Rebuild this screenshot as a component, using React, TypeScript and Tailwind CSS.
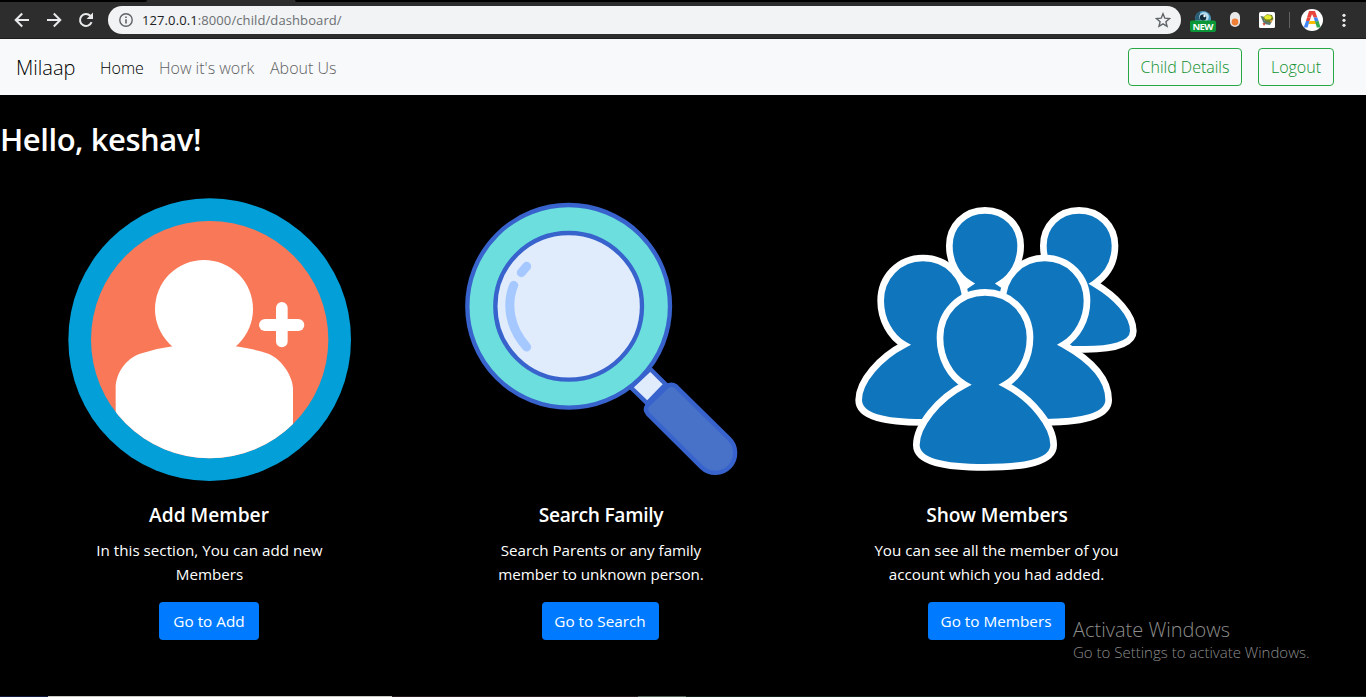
import React from "react";

const ui = "font-['Open_Sans','Noto_Sans',sans-serif]";

function BrowserBar() {
  return (
    <header className="flex h-[39px] flex-col bg-[#2d2d2d]">
      <div className="flex h-[2px] shrink-0 bg-[#2d2d2d]">
        <span className="w-[147px] shrink-0 rounded-br-sm bg-black" />
        <span className="w-[148px]" />
        <span className="flex-1 rounded-bl-sm bg-black" />
      </div>
      <div className="flex h-[36px] shrink-0 items-center">
        <svg className="ml-[14px] h-4 w-4 shrink-0" viewBox="0 0 16 16" fill="none" stroke="#e8eaec" strokeWidth="2">
          <path d="M15 8H2.5M8.2 1.5L1.7 8l6.5 6.5" />
        </svg>
        <svg className="ml-4 h-4 w-4 shrink-0" viewBox="0 0 16 16" fill="none" stroke="#e8eaec" strokeWidth="2">
          <path d="M1 8h12.5M7.8 1.5L14.3 8l-6.5 6.5" />
        </svg>
        <svg className="ml-4 h-4 w-4 shrink-0" viewBox="0 0 16 16" fill="none" stroke="#e8eaec" strokeWidth="2">
          <path d="M13.6 10.2A6 6 0 1 1 12.3 3.8L14 5.5" />
          <path d="M15 0.6V7H8.6z" fill="#e8eaec" stroke="none" />
        </svg>
        <div className="ml-[14px] flex h-7 w-[1073px] shrink-0 items-center rounded-full bg-[#f1f3f4] pl-[11px] pr-[10px]">
          <svg className="h-[14px] w-[14px]" viewBox="0 0 14 14" fill="none" stroke="#5f6368" strokeWidth="1.4">
            <circle cx="7" cy="7" r="6.2" />
            <path d="M7 6.2v4.3M7 3.4v1.5" strokeWidth="1.6" />
          </svg>
          <span className={`${ui} ml-[9px] whitespace-nowrap text-[13px] leading-5 tracking-[0.1px] text-[#202124]`}>
            127.0.0.1<span className="text-[#6b6f73]">:8000/child/dashboard/</span>
          </span>
          <svg className="ml-auto h-4 w-4" viewBox="0 0 16 16" fill="none" stroke="#5f6368" strokeWidth="1.4">
            <path d="M8 1.8l1.8 4.4 4.7.4-3.6 3.1 1.1 4.6L8 11.8l-4 2.5 1.1-4.6-3.6-3.1 4.7-.4z" />
          </svg>
        </div>
        <svg className="ml-[9px] h-6 w-[26px] shrink-0" viewBox="0 0 26 24">
          <circle cx="13" cy="11" r="8" fill="#4d9bc4" />
          <path d="M5 11a8 8 0 0 1 5-7.4l2 8.4H5z" fill="#2b5c75" />
          <circle cx="14" cy="9" r="4.8" fill="#b9def0" />
          <circle cx="13" cy="9.6" r="3.2" fill="#102d3d" />
          <circle cx="14.5" cy="8" r="1.2" fill="#fff" />
          <rect y="12.5" width="26" height="11.5" rx="2" fill="#0b9637" />
          <text x="13" y="22" textAnchor="middle" fill="white" fontFamily="Open Sans" fontWeight="700" fontSize="9.5" textLength="21">NEW</text>
        </svg>
        <svg className="ml-[14px] h-4 w-[10px] shrink-0" viewBox="0 0 10 16">
          <rect width="10" height="15" rx="5" fill="#e8e8e8" />
          <circle cx="5" cy="10" r="3.4" fill="#ef7e36" />
        </svg>
        <svg className="ml-[19px] h-4 w-4 shrink-0" viewBox="0 0 16 16">
          <rect width="16" height="16" rx="1.5" fill="#fff" />
          <path d="M1.5 4l3 .5 1 4 7 1.5-1.5 3-6-1z" fill="#5d7770" />
          <path d="M4 5.5L8 2.2l5 .8 1.5 4-4 3.5-4.5-1.5z" fill="#6c7d22" />
          <ellipse cx="9" cy="5.3" rx="3.6" ry="2.3" fill="#e3ec2e" />
          <path d="M11 8h3l-2 3z" fill="#d99a45" />
          <path d="M3.5 11l3 .5-1.5 2.5z" fill="#e0442f" />
        </svg>
        <span className="ml-[14px] h-4 w-px bg-[#626262]" />
        <svg className="ml-[11px] h-[22px] w-[22px] shrink-0" viewBox="0 0 22 22">
          <circle cx="11" cy="11" r="11" fill="#fff" />
          <path d="M8 2h6l2.3 6.5h-3.6L11 5 9.8 8.5H6z" fill="#e8453c" />
          <path d="M6 8.5h3.8L8.6 12H5z" fill="#e8453c" />
          <path d="M5 12h3.6L6.5 18.5H2.7z" fill="#4285f4" />
          <path d="M12.7 8.5h3.6L17.6 12l-3.6 1z" fill="#4285f4" />
          <path d="M8.6 12H14l1 3H7.6z" fill="#fbbc05" />
          <path d="M14 12.5l3.6-.5 2 6.5h-3.8z" fill="#34a853" />
        </svg>
        <svg className="ml-[19px] h-4 w-1 shrink-0" viewBox="0 0 4 16" fill="#e8eaec">
          <circle cx="2" cy="3.3" r="1.6" /><circle cx="2" cy="8.3" r="1.6" /><circle cx="2" cy="13.3" r="1.6" />
        </svg>
      </div>
      <div className="h-px bg-[#1d1d1d]" />
    </header>
  );
}

function AddMemberArt() {
  return (
    <svg className="h-[286px] w-[286px]" viewBox="18 18 858 858">
      <defs><clipPath id="disc"><circle cx="449" cy="449" r="356" /></clipPath></defs>
      <circle cx="449" cy="449" r="424" fill="#029fd8" />
      <circle cx="449" cy="449" r="356" fill="#f97858" />
      <g fill="#fff">
        <circle cx="432" cy="357" r="147" />
        <path clipPath="url(#disc)" d="M338 469Q290 475 240 491C198 506 167 549 167 595V860H699V595C699 562 667 508 625 491Q580 476 527 469L440 430z" />
        <rect x="648" y="336" width="35" height="136" rx="17.5" />
        <rect x="597" y="387" width="136" height="36" rx="18" />
      </g>
    </svg>
  );
}

function SearchArt() {
  return (
    <svg className="h-[286px] w-[286px]" viewBox="6 18 858 858">
      <g stroke="#3863cd" strokeWidth="13">
        <path d="M586 537L632 583 577 640 527 592z" fill="#e0ebfc" />
        <path d="M577 646L636 589Q649 579 663 589L822 746A58 58 0 0 1 740 832L578 671Q568 659 577 646z" fill="#4872c8" />
        <circle cx="341" cy="349" r="304" fill="#6bdedd" />
        <circle cx="341" cy="349" r="220" fill="#e0ebfc" />
      </g>
      <path d="M215 229L199 248M176 286C154 340 162 413 215 471" fill="none" stroke="#a4c8ff" strokeWidth="27" strokeLinecap="round" />
    </svg>
  );
}

function MembersArt() {
  return (
    <svg className="h-[286px] w-[286px]" viewBox="24 18 858 858">
      <g fill="#0f75bd" stroke="#fff" strokeWidth="20" strokeMiterlimit="10">
        <path d="M420 61C358 61 313 108 313 167C313 220 338 260 372 281L335 306V420H505V306L468 281C502 260 527 220 527 167C527 108 482 61 420 61z" />
        <path d="M702 61C640 61 595 108 595 167C595 220 620 260 654 281L600 478H720C790 478 865 467 865 423C865 373 813 319 749 281C783 258 810 220 810 167C810 108 764 61 702 61z" />
        <path d="M234 204C160 204 107 262 107 332C107 389 136 441 177 464C105 501 41 573 41 630C41 683 127 697 234 697H400V464L361 332C361 262 308 204 234 204z" />
        <path d="M599 204C525 204 473 262 473 332V697H599C704 697 791 681 791 630C791 567 738 510 656 464C697 440 726 388 726 332C726 262 673 204 599 204z" />
        <path d="M420 307C343 307 285 367 285 443C285 504 315 559 359 584C278 625 214 708 214 765C214 817 302 832 420 832C538 832 626 817 626 765C626 708 563 627 481 584C525 558 555 503 555 443C555 367 497 307 420 307z" />
      </g>
    </svg>
  );
}

interface CardProps {
  art: React.ReactNode;
  title: string;
  lines: [string, string];
  action: string;
  place: string;
  titleFit: string;
  textFit: string;
  buttonFit: string;
}

function Card({ art, title, lines, action, place, titleFit, textFit, buttonFit }: CardProps) {
  return (
    <article className={`flex w-[286px] shrink-0 flex-col items-center ${place}`}>
      {art}
      <h2 className={`mt-[21px] whitespace-nowrap text-[19.2px] font-semibold leading-6 ${titleFit}`}>{title}</h2>
      <p className={`mt-[11px] whitespace-nowrap text-center text-[15.2px] leading-6 ${textFit}`}>
        {lines[0]}<br />{lines[1]}
      </p>
      <button className={`mt-4 flex h-[38px] items-center justify-center whitespace-nowrap rounded bg-[#007bff] text-[15.3px] leading-6 ${buttonFit}`}>{action}</button>
    </article>
  );
}

export default function App() {
  return (
    <div className={`${ui} relative flex h-[697px] w-[1366px] flex-col overflow-hidden bg-black text-white`}>
      <BrowserBar />
      <nav className="flex h-14 shrink-0 items-center bg-[#f8f9fa] pl-4 pr-8 text-[16px] font-light text-[#606162]">
        <a className="w-[84px] pt-px text-[20px] text-black">Milaap</a>
        <a className="w-[59px] pt-px text-black">Home</a>
        <a className="w-[111px] pt-px">How it's work</a>
        <a className="pt-px">About Us</a>
        <button className="ml-auto h-[38px] w-[114px] whitespace-nowrap rounded border border-[#28a745] text-[#0f9030]">Child Details</button>
        <button className="ml-4 h-[38px] w-[76px] whitespace-nowrap rounded border border-[#28a745] text-[#0f9030]">Logout</button>
      </nav>
      <h1 className="mt-[25px] whitespace-nowrap text-[31px] font-semibold leading-[39px] tracking-[-0.45px]">Hello, keshav!</h1>
      <main className="mt-[37px] flex">
        <Card art={<AddMemberArt />} title="Add Member" lines={["In this section, You can add new", "Members"]} action="Go to Add" place="ml-[66px]" titleFit="" textFit="pl-px" buttonFit="w-[100px]" />
        <Card art={<SearchArt />} title="Search Family" lines={["Search Parents or any family", "member to unknown person."]} action="Go to Search" place="ml-[105px]" titleFit="pl-0.5 tracking-[-0.3px]" textFit="pl-0.5 tracking-[-0.05px]" buttonFit="w-[117px]" />
        <Card art={<MembersArt />} title="Show Members" lines={["You can see all the member of you", "account which you had added."]} action="Go to Members" place="ml-[110px]" titleFit="pl-0.5 tracking-[-0.1px]" textFit="pl-px" buttonFit="w-[137px]" />
      </main>
      <aside className="absolute left-[1073px] top-[617px] whitespace-nowrap font-light text-[#8c8c8c]">
        <div className="text-[20px] leading-[26px]">Activate Windows</div>
        <div className="text-[15px] leading-[19px]">Go to Settings to activate Windows.</div>
      </aside>
      <footer className="mt-auto flex h-px shrink-0">
        <span className="w-12 bg-[#101c3c]" />
        <span className="w-[344px] bg-[#c8c8c4]" />
        <span className="w-[246px] bg-[#251b1d]" />
        <span className="w-12 bg-[#52635a]" />
        <span className="flex-1 bg-[#101c18]" />
      </footer>
    </div>
  );
}
